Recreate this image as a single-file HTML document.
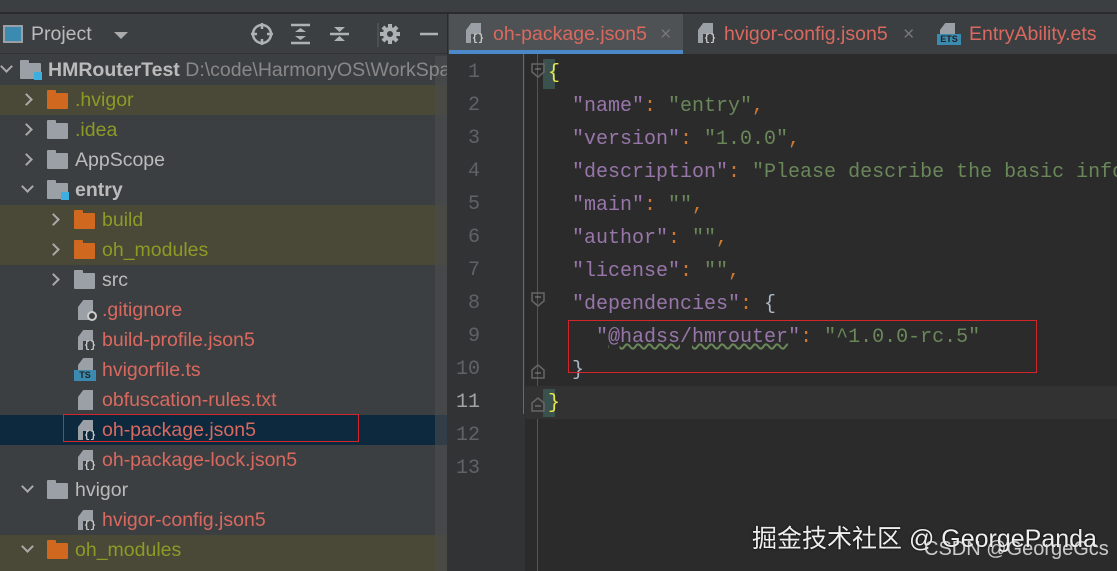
<!DOCTYPE html>
<html><head><meta charset="utf-8"><style>
*{margin:0;padding:0;box-sizing:border-box}
body{width:1117px;height:571px;overflow:hidden;background:#2b2b2b;position:relative;font-family:"Liberation Sans","Noto Sans CJK SC",sans-serif}
.a{position:absolute;white-space:nowrap}
.t{font-size:19.5px;line-height:30px;height:30px}
.w{color:#bbbbbb}.o{color:#8e9a26}.r{color:#d9695f}.g{color:#888}
.chev{position:absolute;width:9px;height:9px;border-right:2px solid #aaa;border-bottom:2px solid #aaa}
.right{transform:rotate(-45deg)}
.down{transform:rotate(45deg)}
.fold{position:absolute;width:21px;height:16px;background:#9aa0a6;border-radius:1px}
.fold:before{content:"";position:absolute;left:0;top:-3px;width:9px;height:4px;background:inherit;border-radius:1px 1px 0 0}
.fo{background:#d0691f}
.file{position:absolute;width:15px;height:20px;background:#9aa0a6;clip-path:polygon(35% 0,100% 0,100% 100%,0 100%,0 35%)}
.js{position:absolute;font:bold 10px "Liberation Mono",monospace;color:#ccc;background:#3c3f41;padding:0 1px;line-height:11px}
.mono{font-family:"Liberation Mono","DejaVu Sans Mono",monospace;font-size:20px;line-height:33px}
.ln{color:#606366;width:40px;text-align:right;left:440px}
.k{color:#9876aa}.s{color:#6a8759}.p{color:#cc7832}.b{color:#a9b7c6}
</style></head><body>
<div class="a" style="left:0;top:0;width:1117px;height:13px;background:#3c3f41;border-bottom:1px solid #2b2b2b"></div>
<div class="a" style="left:0;top:14px;width:447px;height:557px;background:#3c3f41"></div>
<div class="a" style="left:0;top:53px;width:447px;height:1px;background:#323232"></div>
<div class="a" style="left:3px;top:25px;width:20px;height:18px;border:2px solid #9aa0a6;background:#3b8bb0"></div>
<div class="a t w" style="left:31px;top:19px">Project</div>
<div class="a" style="left:114px;top:32px;border-left:7px solid transparent;border-right:7px solid transparent;border-top:7px solid #aaa"></div>
<svg class="a" style="left:248px;top:21px" width="200" height="28" viewBox="0 0 200 28">
 <g stroke="#aeb2b6" stroke-width="2.5" fill="none">
  <circle cx="14" cy="13" r="9"/><line x1="14" y1="2" x2="14" y2="8"/><line x1="14" y1="18" x2="14" y2="24"/><line x1="3" y1="13" x2="9" y2="13"/><line x1="19" y1="13" x2="25" y2="13"/>
  <line x1="43" y1="4" x2="62" y2="4"/><line x1="43" y1="22" x2="62" y2="22"/>
  <line x1="82" y1="13" x2="101" y2="13"/>
  <line x1="130" y1="2" x2="130" y2="26" stroke="#555" stroke-width="1.5"/>
  <line x1="172" y1="13" x2="190" y2="13"/>
 </g>
 <g fill="#aeb2b6"><path d="M47 11 L52.5 7 L58 11Z M47 15 L52.5 19 L58 15Z"/><path d="M86 6 L91.5 11 L97 6Z M86 20 L91.5 15 L97 20Z"/>
 <circle cx="142" cy="13" r="7"/>
 <rect x="140" y="3" width="4" height="20"/><rect x="132" y="11" width="20" height="4"/><rect x="140" y="3" width="4" height="20" transform="rotate(45 142 13)"/><rect x="140" y="3" width="4" height="20" transform="rotate(-45 142 13)"/><circle cx="142" cy="13" r="3" fill="#3c3f41"/></g>
</svg>
<div class="a" style="left:0;top:85px;width:447px;height:30px;background:#4a4836"></div>
<div class="a" style="left:0;top:205px;width:447px;height:60px;background:#4a4836"></div>
<div class="a" style="left:0;top:535px;width:447px;height:36px;background:#4a4836"></div>
<div class="a" style="left:0;top:415px;width:447px;height:30px;background:#0d293e"></div>
<div class="a" style="left:435px;top:56px;width:12px;height:515px;background:#4b4d4f;opacity:.6"></div>
<div class="chev down a" style="left:2px;top:62px"></div>
<div class="fold a" style="left:20px;top:63px"></div><div class="a" style="left:34px;top:72px;width:8px;height:8px;background:#3caee0"></div>
<div class="a t w" style="left:48px;top:55px;font-weight:bold">HMRouterTest <span class="g" style="font-weight:normal">D:\code\HarmonyOS\WorkSpa</span></div>

<div class="chev right a" style="left:22px;top:95px"></div><div class="fold fo a" style="left:47px;top:93px"></div><div class="a t o" style="left:75px;top:85px">.hvigor</div>
<div class="chev right a" style="left:22px;top:125px"></div><div class="fold a" style="left:47px;top:123px"></div><div class="a t o" style="left:75px;top:115px">.idea</div>
<div class="chev right a" style="left:22px;top:155px"></div><div class="fold a" style="left:47px;top:153px"></div><div class="a t w" style="left:75px;top:145px">AppScope</div>
<div class="chev down a" style="left:23px;top:182px"></div><div class="fold a" style="left:47px;top:183px"></div><div class="a" style="left:61px;top:192px;width:8px;height:8px;background:#3caee0"></div><div class="a t w" style="left:75px;top:175px;font-weight:bold">entry</div>

<div class="chev right a" style="left:49px;top:215px"></div><div class="fold fo a" style="left:74px;top:213px"></div><div class="a t o" style="left:102px;top:205px">build</div>
<div class="chev right a" style="left:49px;top:245px"></div><div class="fold fo a" style="left:74px;top:243px"></div><div class="a t o" style="left:102px;top:235px">oh_modules</div>
<div class="chev right a" style="left:49px;top:275px"></div><div class="fold a" style="left:74px;top:273px"></div><div class="a t w" style="left:102px;top:265px">src</div>

<div class="file a" style="left:78px;top:300px"></div><div class="a" style="left:87px;top:311px;width:10px;height:10px;border:2px solid #ccc;border-radius:50%;background:#3c3f41"></div><div class="a t r" style="left:102px;top:295px">.gitignore</div>
<div class="file a" style="left:78px;top:330px"></div><div class="js" style="left:83px;top:341px">{}</div><div class="a t r" style="left:102px;top:325px">build-profile.json5</div>
<div class="file a" style="left:78px;top:358px"></div><div class="a" style="left:74px;top:370px;width:22px;height:11px;background:#3b8bb0;font:bold 9px 'Liberation Sans';color:#222;text-align:center;line-height:11px">TS</div><div class="a t r" style="left:102px;top:355px">hvigorfile.ts</div>
<div class="file a" style="left:78px;top:390px"></div><div class="a t r" style="left:102px;top:385px">obfuscation-rules.txt</div>
<div class="file a" style="left:78px;top:420px"></div><div class="js" style="left:83px;top:431px;background:#0d293e">{}</div><div class="a t r" style="left:102px;top:415px">oh-package.json5</div>
<div class="a" style="left:63px;top:414px;width:296px;height:28px;border:1px solid #d3252a"></div>
<div class="file a" style="left:78px;top:450px"></div><div class="js" style="left:83px;top:461px">{}</div><div class="a t r" style="left:102px;top:445px">oh-package-lock.json5</div>
<div class="chev down a" style="left:23px;top:482px"></div><div class="fold a" style="left:47px;top:483px"></div><div class="a t w" style="left:75px;top:475px">hvigor</div>
<div class="file a" style="left:78px;top:510px"></div><div class="js" style="left:83px;top:521px">{}</div><div class="a t r" style="left:102px;top:505px">hvigor-config.json5</div>
<div class="chev down a" style="left:23px;top:542px"></div><div class="fold fo a" style="left:47px;top:543px"></div><div class="a t o" style="left:75px;top:535px">oh_modules</div>

<div class="a" style="left:447px;top:14px;width:670px;height:40px;background:#3c3f41;border-left:1px solid #2b2b2b"></div>
<div class="a" style="left:449px;top:14px;width:234px;height:40px;background:#4e5254"></div>
<div class="a" style="left:449px;top:50px;width:234px;height:4px;background:#4a88c7"></div>
<div class="file a" style="left:466px;top:23px"></div><div class="js" style="left:471px;top:34px;background:#4e5254">{}</div>
<div class="a t r" style="left:493px;top:19px">oh-package.json5</div><div class="a t" style="left:660px;top:19px;color:#777">×</div>
<div class="file a" style="left:698px;top:23px"></div><div class="js" style="left:703px;top:34px">{}</div>
<div class="a t r" style="left:724px;top:19px">hvigor-config.json5</div><div class="a t" style="left:903px;top:19px;color:#777">×</div>
<div class="file a" style="left:940px;top:23px"></div><div class="a" style="left:937px;top:34px;width:24px;height:11px;background:#3b8bb0;font:bold 9px 'Liberation Sans';color:#222;text-align:center;line-height:11px">ETS</div>
<div class="a t r" style="left:969px;top:19px">EntryAbility.ets</div>
<div class="a" style="left:447px;top:54px;width:78px;height:517px;background:#313335"></div>
<div class="a" style="left:523px;top:54px;width:1px;height:360px;background:#4c7a66"></div>
<div class="a" style="left:537px;top:54px;width:1px;height:517px;background:#555"></div>
<div class="a" style="left:524px;top:386px;width:593px;height:33px;background:#323232"></div>
<div class="a" style="left:543px;top:59px;width:12px;height:30px;background:#3b514d"></div>
<div class="a" style="left:543px;top:389px;width:12px;height:28px;background:#3b514d"></div>
<div class="a mono ln" style="top:56px">1</div><div class="a mono ln" style="top:89px">2</div><div class="a mono ln" style="top:122px">3</div><div class="a mono ln" style="top:155px">4</div><div class="a mono ln" style="top:188px">5</div><div class="a mono ln" style="top:221px">6</div><div class="a mono ln" style="top:254px">7</div><div class="a mono ln" style="top:287px">8</div><div class="a mono ln" style="top:320px">9</div><div class="a mono ln" style="top:353px">10</div><div class="a mono ln" style="top:386px;color:#a4a3a3">11</div><div class="a mono ln" style="top:419px">12</div><div class="a mono ln" style="top:452px">13</div>
<svg class="a" style="left:528px;top:60px" width="20" height="360"><g fill="none" stroke="#666" stroke-width="1.5"><path d="M4 4h12v8l-6 5l-6-5z"/><path d="M4 233h12v8l-6 5l-6-5z"/><path d="M4 310l6-5l6 5v8h-12z"/><path d="M4 343l6-5l6 5v8h-12z"/></g><g stroke="#888"><line x1="7" y1="9" x2="13" y2="9"/><line x1="7" y1="237" x2="13" y2="237"/><line x1="7" y1="313" x2="13" y2="313"/><line x1="7" y1="346" x2="13" y2="346"/></g></svg>
<div class="a mono" style="left:548px;top:57px;color:#e8e84a">{</div>
<div class="a mono" style="left:572px;top:90px"><span class="k">"name"</span><span class="p">: </span><span class="s">"entry"</span><span class="p">,</span></div>
<div class="a mono" style="left:572px;top:123px"><span class="k">"version"</span><span class="p">: </span><span class="s">"1.0.0"</span><span class="p">,</span></div>
<div class="a mono" style="left:572px;top:156px"><span class="k">"description"</span><span class="p">: </span><span class="s">"Please describe the basic info</span></div>
<div class="a mono" style="left:572px;top:189px"><span class="k">"main"</span><span class="p">: </span><span class="s">""</span><span class="p">,</span></div>
<div class="a mono" style="left:572px;top:222px"><span class="k">"author"</span><span class="p">: </span><span class="s">""</span><span class="p">,</span></div>
<div class="a mono" style="left:572px;top:255px"><span class="k">"license"</span><span class="p">: </span><span class="s">""</span><span class="p">,</span></div>
<div class="a mono" style="left:572px;top:288px"><span class="k">"dependencies"</span><span class="p">: </span><span class="b">{</span></div>
<div class="a mono" style="left:596px;top:321px"><span class="k">"<span style="text-decoration:underline wavy #6a8759">@hadss</span>/<span style="text-decoration:underline wavy #6a8759">hmrouter</span>"</span><span class="p">: </span><span class="s">"^1.0.0-rc.5"</span></div>
<div class="a mono b" style="left:572px;top:354px">}</div>
<div class="a mono" style="left:548px;top:387px;color:#e8e84a">}</div>
<div class="a" style="left:568px;top:320px;width:469px;height:53px;border:1px solid #d3252a"></div>
<div class="a" style="left:752px;top:519px;font-size:25px;color:#eee;text-shadow:0 0 2px #000">掘金技术社区 @ GeorgePanda</div>
<div class="a" style="left:924px;top:538px;font-size:20px;color:rgba(230,230,230,.85)">CSDN @GeorgeGcs</div>
</body></html>
